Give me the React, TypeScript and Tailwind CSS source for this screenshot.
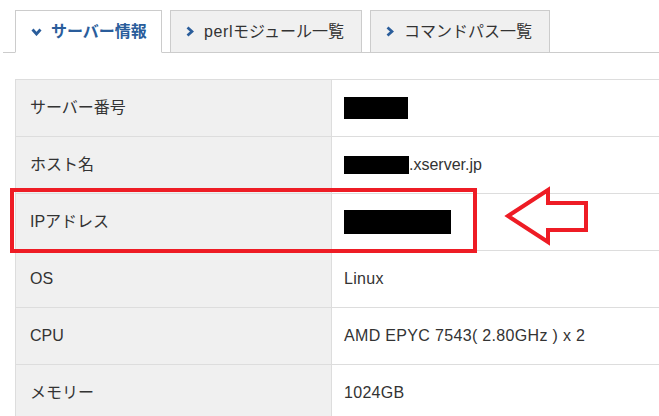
import React from "react";

const font = { fontFamily: '"Liberation Sans", Arial, "Noto Sans CJK JP", sans-serif' };

function ChevronRight() {
  return (
    <svg width="8" height="11" viewBox="0 0 8 11" className="shrink-0">
      <path d="M1.5 1.5 L6 5.5 L1.5 9.5" fill="none" stroke="#2a5d9b" strokeWidth="2.8" strokeLinejoin="miter" />
    </svg>
  );
}
function ChevronDown() {
  return (
    <svg width="11" height="8" viewBox="0 0 11 8" className="shrink-0">
      <path d="M1.5 1.5 L5.5 6 L9.5 1.5" fill="none" stroke="#2a5d9b" strokeWidth="2.8" strokeLinejoin="miter" />
    </svg>
  );
}

const Redact = ({ w, h }: { w: number; h: number }) => (
  <span className="inline-block bg-black align-middle" style={{ width: w, height: h }} />
);

const rows: { label: string; value: React.ReactNode }[] = [
  { label: "サーバー番号", value: <Redact w={64} h={22} /> },
  {
    label: "ホスト名",
    value: (
      <span className="flex items-center">
        <Redact w={65} h={18} />
        <span>.xserver.jp</span>
      </span>
    ),
  },
  { label: "IPアドレス", value: <Redact w={107} h={24} /> },
  { label: "OS", value: <span className="tracking-[0.3px]">Linux</span> },
  { label: "CPU", value: <span className="tracking-[0.33px]">AMD EPYC 7543( 2.80GHz ) x 2</span> },
  { label: "メモリー", value: <span className="tracking-[0.3px]">1024GB</span> },
];

export default function App() {
  return (
    <div className="relative w-[659px] h-[416px] overflow-hidden bg-white text-[16px] text-[#333]" style={font}>
      <div className="pt-[10px] pl-[3px]">
        <div className="flex gap-[8px] pl-[12px] border-b border-[#cccccc] h-[43px]">
          <div className="flex items-center gap-[9px] w-[147px] h-[43px] pl-[15px] bg-white border border-[#cccccc] border-b-white font-bold text-[#2a5d9b]">
            <ChevronDown />
            <span>サーバー情報</span>
          </div>
          <div className="flex items-center gap-[10px] w-[192px] h-[42px] pl-[15px] bg-[#f0f0f0] border border-[#cccccc] border-b-0">
            <ChevronRight />
            <span><span className="tracking-[0.6px]">perl</span>モジュール一覧</span>
          </div>
          <div className="flex items-center gap-[10px] w-[180px] h-[42px] pl-[15px] bg-[#f0f0f0] border border-[#cccccc] border-b-0">
            <ChevronRight />
            <span>コマンドパス一覧</span>
          </div>
        </div>
      </div>
      <div className="ml-[15px] mt-[26px] w-[700px] border-t border-l border-[#dddddd]">
        {rows.map((r) => (
          <div key={r.label} className="flex h-[57px] border-b border-[#dddddd]">
            <div className="w-[316px] shrink-0 flex items-center pl-[14px] bg-[#f0f0f0] border-r border-[#dddddd]">
              {r.label}
            </div>
            <div className="flex-1 flex items-center pl-[12px]">{r.value}</div>
          </div>
        ))}
      </div>
      <div className="absolute left-[10px] top-[188px] w-[467px] h-[65px] border-[4px] border-[#ee1c25]" />
      <svg className="absolute left-0 top-0" width="659" height="416" viewBox="0 0 659 416">
        <path
          d="M508 216 L548 190 L548 203 L586 203 L586 230 L548 230 L548 242 Z"
          fill="white"
          stroke="#ee1c25"
          strokeWidth="4"
          strokeLinejoin="miter"
        />
      </svg>
    </div>
  );
}
